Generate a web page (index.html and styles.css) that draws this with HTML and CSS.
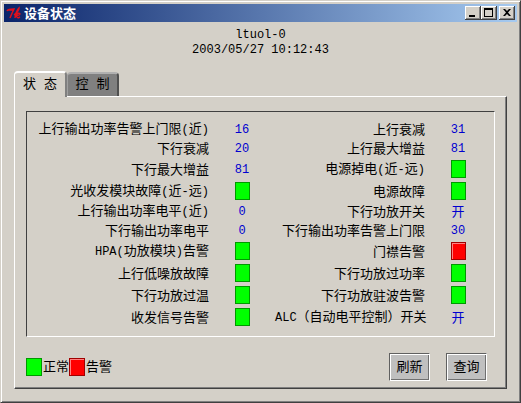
FILE: index.html
```html
<!DOCTYPE html>
<html lang="zh-CN">
<head>
<meta charset="utf-8">
<title>设备状态</title>
<link rel="stylesheet" href="styles.css">
</head>
<body>
<div class="window">
  <header class="titlebar">
    <svg class="logo" viewBox="0 0 15 14" aria-hidden="true">
      <path d="M1 5 Q2 3 8 3 Q6 7 4 12 M2 4 L7 4 M9 12 Q10 5 13 2 Q13 5 8 9 M9 9 L12 12 M9 9 Q13 6 14 8 Q13 10 10 9 M12 12 L14 11" fill="none" stroke="#e0101c" stroke-width="1.5"/>
    </svg>
    <h1 class="caption">设备状态</h1>
    <div class="controls">
      <button class="control" aria-label="最小化"><svg viewBox="0 0 16 14"><path d="M4 9h6v2H4z"/></svg></button>
      <button class="control" aria-label="最大化"><svg viewBox="0 0 16 14"><path fill-rule="evenodd" d="M3 2h9v9H3zM4 4v6h7V4z"/></svg></button>
      <button class="control control-close" aria-label="关闭"><svg viewBox="0 0 16 14"><path d="M4 3h2l2 2 2-2h2L9 6.500l3 3.500h-2L8 8l-2 2H4l3-3.500z"/></svg></button>
    </div>
  </header>
  <main class="content">
    <div class="device">
      <div>ltuol-0</div>
      <div>2003/05/27 10:12:43</div>
    </div>
    <div class="tabs" role="tablist">
      <button class="tab tab-active" role="tab" aria-selected="true">状 态</button>
      <button class="tab" role="tab" aria-selected="false">控 制</button>
    </div>
    <section class="panel">
      <div class="group">
        <table class="status">
          <colgroup><col><col class="col-value"><col class="col-label"><col class="col-value"></colgroup>
          <tbody>
            <tr><th>上行输出功率告警上门限<i>(</i>近<i>)</i></th><td class="value">16</td><th>上行衰减</th><td class="value">31</td></tr>
            <tr><th>下行衰减</th><td class="value">20</td><th>上行最大增益</th><td class="value">81</td></tr>
            <tr class="tall"><th>下行最大增益</th><td class="value">81</td><th>电源掉电<i>(</i>近<i>-</i>远<i>)</i></th><td><span class="lamp"></span></td></tr>
            <tr class="tall"><th>光收发模块故障<i>(</i>近<i>-</i>远<i>)</i></th><td><span class="lamp"></span></td><th>电源故障</th><td><span class="lamp"></span></td></tr>
            <tr><th>上行输出功率电平<i>(</i>近<i>)</i></th><td class="value">0</td><th>下行功放开关</th><td class="switch">开</td></tr>
            <tr><th>下行输出功率电平</th><td class="value">0</td><th>下行输出功率告警上门限</th><td class="value">30</td></tr>
            <tr class="tall"><th><i>HPA(</i>功放模块<i>)</i>告警</th><td><span class="lamp"></span></td><th>门襟告警</th><td><span class="lamp lamp-alarm"></span></td></tr>
            <tr class="tall"><th>上行低噪放故障</th><td><span class="lamp"></span></td><th>下行功放过功率</th><td><span class="lamp"></span></td></tr>
            <tr class="tall"><th>下行功放过温</th><td><span class="lamp"></span></td><th>下行功放驻波告警</th><td><span class="lamp"></span></td></tr>
            <tr class="tall"><th>收发信号告警</th><td><span class="lamp"></span></td><th><i>ALC</i>（自动电平控制）开关</th><td class="switch">开</td></tr>
          </tbody>
        </table>
      </div>
      <footer class="footer">
        <div class="legend">
          <span class="lamp"></span><span class="legend-text">正常</span>
          <span class="lamp lamp-alarm"></span><span class="legend-text">告警</span>
        </div>
        <div class="actions">
          <button class="action">刷新</button>
          <button class="action">查询</button>
        </div>
      </footer>
    </section>
  </main>
</div>
</body>
</html>
```
FILE: styles.css
```css
* {
  box-sizing: border-box;
}

body {
  margin: 0;
  background: #d4d0c8;
  color: #000;
  font: 13px/15px "Noto Sans CJK SC", sans-serif;
}

button {
  margin: 0;
  padding: 0;
  color: inherit;
  font: inherit;
}

.window {
  display: flex;
  flex-direction: column;
  min-height: 100vh;
  padding: 2px;
  border: 1px solid;
  border-color: #d4d0c8 #404040 #404040 #d4d0c8;
  box-shadow: inset 1px 1px #fff, inset -1px -1px #808080;
}

.titlebar {
  display: flex;
  align-items: center;
  height: 18px;
  margin: 1px;
  padding: 0 2px;
  background: linear-gradient(to right, #0a246a, #a6caf0);
}

.logo {
  width: 15px;
  height: 14px;
}

.caption {
  flex: 1;
  margin: 0 0 0 3px;
  padding-bottom: 2px;
  color: #fff;
  font-size: 13px;
  font-weight: 700;
}

.controls {
  display: flex;
}

.control {
  width: 16px;
  height: 14px;
  border: 0;
  background: #d4d0c8;
  box-shadow: inset -1px -1px #404040, inset 1px 1px #fff, inset -2px -2px #808080;
}

.control svg {
  display: block;
  width: 16px;
  height: 14px;
}

.control-close {
  margin-left: 2px;
}

.content {
  flex: 1;
  display: flex;
  flex-direction: column;
  padding: 5px 11px 11px;
}

.device {
  text-align: center;
  font: 12px/15px "Liberation Mono", monospace;
}

.tabs {
  display: flex;
  align-items: flex-end;
  padding-top: 13px;
}

.tab {
  width: 52px;
  height: 24px;
  padding-bottom: 2px;
  border: solid;
  border-width: 2px 2px 0 1px;
  border-color: #b0b0b0 #505050 #505050 #a0a0a0;
  border-radius: 4px 4px 0 0;
  background: #808080;
  font-family: "Liberation Mono", "Noto Sans CJK SC", monospace;
}

.tab-active {
  z-index: 1;
  width: 53px;
  height: 26px;
  margin-bottom: -1px;
  border-color: #fff #808080 #fff #fff;
  background: #d4d0c8;
}

.panel {
  flex: 1;
  display: flex;
  flex-direction: column;
  padding: 14px 11px 0;
  border: 1px solid;
  border-color: #fff #404040 #404040 #fff;
  box-shadow: inset -1px -1px #808080;
}

.group {
  padding: 8px 3px 8px 0;
  border: 1px solid;
  border-color: #404040 #fff #fff #404040;
}

.status {
  width: 100%;
  table-layout: fixed;
  border-collapse: collapse;
}

.col-value {
  width: 66px;
}

.col-label {
  width: 150px;
}

.status tr {
  height: 19px;
}

.status .tall {
  height: 22px;
}

.status th,
.status td {
  padding: 0;
  white-space: nowrap;
}

.status th {
  padding-bottom: 2px;
  font-weight: 400;
  text-align: right;
}

.status i {
  font: 12px "Liberation Mono", monospace;
}

.status td {
  color: #0000d0;
  text-align: center;
}

.status .value {
  padding-top: 2px;
  font-family: "Liberation Mono", monospace;
  font-size: 12px;
}

.status .switch {
  padding-bottom: 2px;
}

.lamp {
  display: block;
  width: 15px;
  height: 18px;
  margin: 0 auto;
  border: 1px solid #009800;
  background: #0f0;
}

.lamp-alarm {
  border-color: #a00000;
  background: #f00;
  box-shadow: inset 1px 1px #ff8080;
}

.footer {
  display: flex;
  align-items: center;
  justify-content: space-between;
  padding: 16px 8px 0 0;
}

.legend {
  display: flex;
  align-items: center;
}

.legend .lamp {
  width: 16px;
  margin: 0 1px 0 0;
}

.legend-text {
  padding-bottom: 3px;
}

.actions {
  display: flex;
  gap: 16px;
}

.action {
  width: 41px;
  height: 28px;
  padding-bottom: 3px;
  border: 1px solid;
  border-color: #606060 #fff #fff #606060;
  background: #c0c0c0;
  box-shadow: inset 1px 1px #fff, inset -1px -1px #707070;
}
```
